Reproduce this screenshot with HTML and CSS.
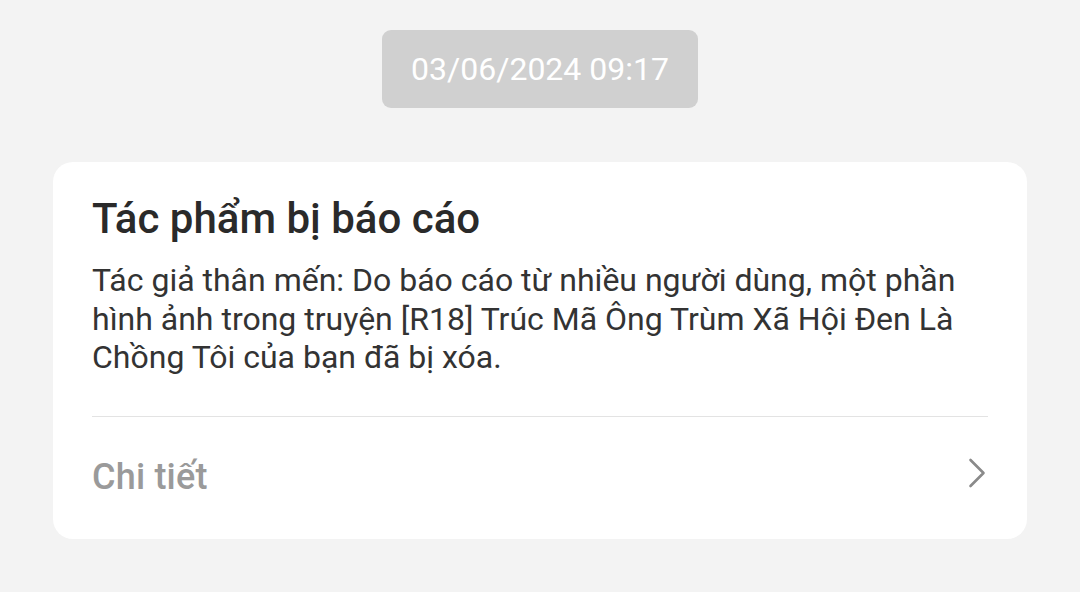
FILE: index.html
```html
<!DOCTYPE html>
<html lang="vi">
<head>
<meta charset="utf-8">
<link rel="stylesheet" href="styles.css">
</head>
<body>
<div class="page">
  <div class="stamp-row"><div class="stamp">03/06/2024 09:17</div></div>
  <div class="card">
    <div class="card-body">
      <h1 class="title">Tác phẩm bị báo cáo</h1>
      <p class="text">Tác giả thân mến: Do báo cáo từ nhiều người dùng, một phần hình ảnh trong truyện [R18] Trúc Mã Ông Trùm Xã Hội Đen Là Chồng Tôi của bạn đã bị xóa.</p>
    </div>
    <div class="divider"></div>
    <div class="detail">
      <span class="detail-label">Chi tiết</span>
      <svg class="chevron" width="18" height="30" viewBox="0 0 18 30"><path d="M2.5 2 L15.5 15 L2.5 28" fill="none" stroke="#8a8a8a" stroke-width="2.6" stroke-linecap="round" stroke-linejoin="round"/></svg>
    </div>
  </div>
</div>
</body>
</html>
```
FILE: styles.css
```css
html, body {
  margin: 0;
  padding: 0;
  background: #f3f3f3;
  font-family: Roboto, "Noto Sans", sans-serif;
}
.page {
  width: 1080px;
  height: 592px;
  padding-top: 30px;
  box-sizing: border-box;
}
.stamp-row {
  display: flex;
  justify-content: center;
}
.stamp {
  width: 316px;
  height: 78px;
  background: #d0d0d0;
  border-radius: 9px;
  color: #ffffff;
  font-size: 32px;
  display: flex;
  align-items: center;
  justify-content: center;
}
.card {
  margin: 54px 53px 0 53px;
  height: 377px;
  background: #ffffff;
  border-radius: 20px;
  padding: 0 39px;
  box-sizing: border-box;
}
.card-body {
  padding-top: 31px;
  padding-bottom: 39px;
}
.title {
  margin: 0;
  font-size: 42px;
  font-weight: 500;
  color: #2a2a2a;
  line-height: 52px;
}
.text {
  margin: 16px 0 0 0;
  font-size: 32px;
  line-height: 38.5px;
  color: #333333;
}
.divider {
  height: 1px;
  background: #e3e3e3;
}
.detail {
  display: flex;
  align-items: center;
  justify-content: space-between;
  height: 122px;
  padding-bottom: 10px;
  box-sizing: border-box;
}
.detail-label {
  font-size: 36px;
  font-weight: 500;
  color: #9a9a9a;
  padding-top: 8px;
  letter-spacing: 0.2px;
}
.chevron {
  display: block;
  margin-right: 2px;
}
```
